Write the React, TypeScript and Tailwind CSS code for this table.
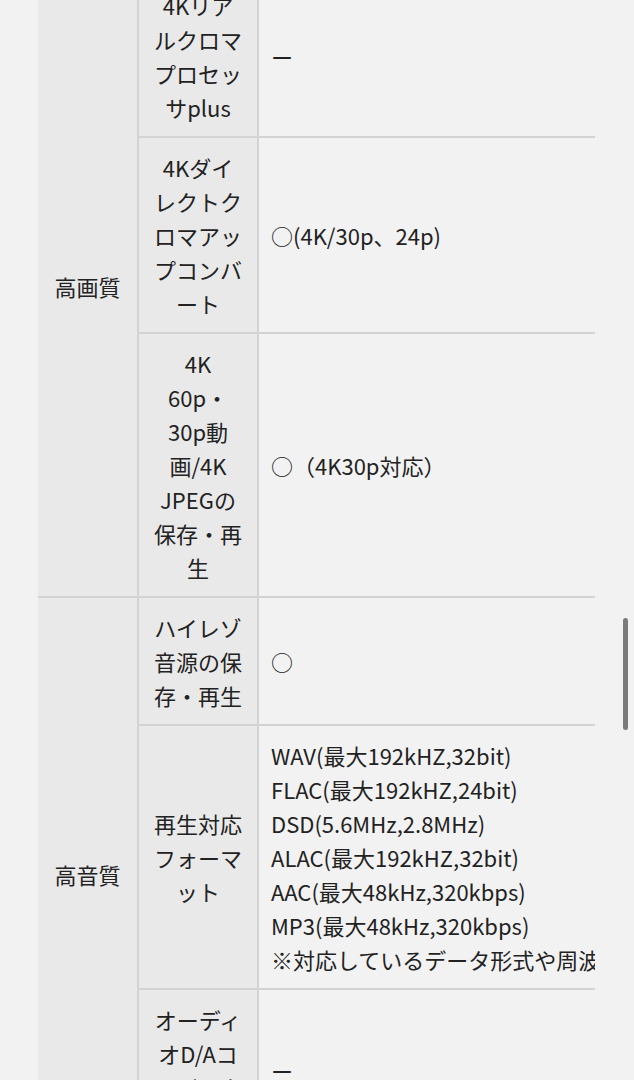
const font = '"Noto Sans CJK JP", "Noto Sans", sans-serif'

type Row = { item: string; value: React.ReactNode }

const picture: Row[] = [
	{ item: '4Kリアルクロマプロセッサplus', value: 'ー' },
	{ item: '4Kダイレクトクロマアップコンバート', value: '○(4K/30p、24p)' },
	{ item: '4K 60p・30p動画/4K JPEGの保存・再生', value: '○（4K30p対応）' },
]

const sound: Row[] = [
	{ item: 'ハイレゾ音源の保存・再生', value: '○' },
	{
		item: '再生対応フォーマット',
		value: (
			<div className="whitespace-nowrap">
				<div>WAV(最大192kHZ,32bit)</div>
				<div>FLAC(最大192kHZ,24bit)</div>
				<div>DSD(5.6MHz,2.8MHz)</div>
				<div>ALAC(最大192kHZ,32bit)</div>
				<div>AAC(最大48kHz,320kbps)</div>
				<div>MP3(最大48kHz,320kbps)</div>
				<div>※対応しているデータ形式や周波数でも再生できない場合があります</div>
			</div>
		),
	},
	{ item: 'オーディオD/Aコンバーター', value: 'ー' },
]

function Group({ title, rows }: { title: string; rows: Row[] }) {
	return (
		<>
			{rows.map((row, i) => (
				<tr key={row.item}>
					{i === 0 && (
						<td
							rowSpan={rows.length}
							className="border-2 border-l-0 border-[#d3d3d3] bg-[#e9e9e9] text-center align-middle"
						>
							{title}
						</td>
					)}
					<td className="border-2 border-[#d3d3d3] bg-[#e9e9e9] px-[14px] py-[12px] text-center align-middle">
						{row.item}
					</td>
					<td className="border-2 border-r-0 border-[#d3d3d3] px-[12px] py-[12px] align-middle">
						{row.value}
					</td>
				</tr>
			))}
		</>
	)
}

export default function App() {
	return (
		<div
			className="relative h-[1080px] w-full overflow-hidden bg-[#f2f2f2] text-[22px] leading-[34px] text-[#222]"
			style={{ fontFamily: font }}
		>
			<div className="-mt-[26px] pl-[38px] pr-[39px]">
				<div className="overflow-hidden">
					<table className="w-[900px] table-fixed border-collapse">
						<colgroup>
							<col className="w-[100px]" />
							<col className="w-[120px]" />
							<col />
						</colgroup>
						<tbody>
							<Group title="高画質" rows={picture} />
							<Group title="高音質" rows={sound} />
						</tbody>
					</table>
				</div>
			</div>
			<div className="absolute left-[623px] top-[618px] h-[112px] w-[5px] rounded-full bg-[#7b7b7b]" />
		</div>
	)
}
